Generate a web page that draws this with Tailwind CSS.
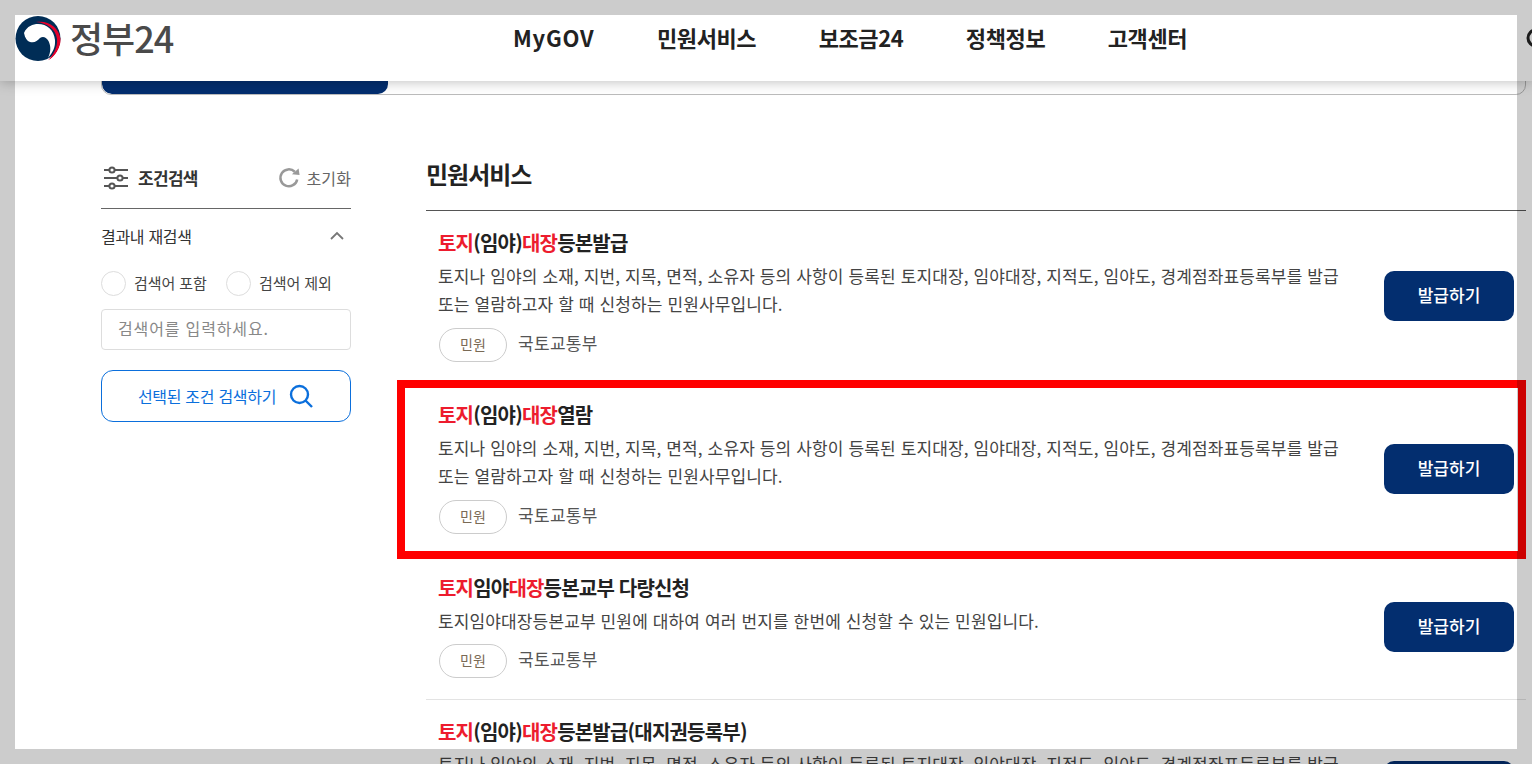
<!DOCTYPE html>
<html lang="ko">
<head>
    <meta charset="UTF-8">
    <meta name="viewport" content="width=device-width, initial-scale=1.0">
    <script src="https://cdn.jsdelivr.net/npm/@tailwindcss/browser@4"></script>
</head>
<body class="bg-white">
    <div class="relative w-[1532px] h-[764px] overflow-hidden bg-white font-['Noto_Sans_CJK_KR','Noto_Sans',sans-serif] text-[#333]">

        <!-- Header -->
        <header class="absolute top-0 left-0 z-10 w-full h-[81px] bg-white shadow-[0_1px_12px_rgba(0,0,0,0.25)]">
            <div class="absolute left-[15px] top-[16px] flex items-center gap-[9px]">
                <svg width="46" height="46" viewBox="0 0 46 46">
                    <circle cx="23" cy="22.5" r="22.5" fill="#002d56"/>
                    <path d="M9 17C12 10 18 8 23 8C32 8 39 14 40 24C40.5 31 38 36 33 42C36 36 36 30 33.5 25C31 21 28 20 25 22C22 25 20 27 15 26C12 25 10 22 9 17Z" fill="#fff"/>
                    <path d="M21 6C33 4 44 11 45.5 23C46 32 40 41 33 44.5C38 39 43 31 42 23C41 13 32 7 21 6Z" fill="#e4002b"/>
                    <path d="M33 44.5C40 41 46 32 45.5 23L46 46H33Z" fill="#fff"/>
                </svg>
                <span class="-mt-[4px] text-[36px] leading-[44px] font-medium text-[#4a4a4a] tracking-[-1px]">정부24</span>
            </div>
            <nav class="absolute left-[513px] top-[20px] flex gap-[62.5px] text-[22px] leading-[34px] font-bold text-[#222] tracking-[-0.4px]">
                <a href="#" class="tracking-[0.8px]">MyGOV</a>
                <a href="#">민원서비스</a>
                <a href="#">보조금24</a>
                <a href="#">정책정보</a>
                <a href="#">고객센터</a>
            </nav>
            <svg class="absolute left-[1526px] top-[28px]" width="20" height="20" viewBox="0 0 20 20" fill="none" stroke="#222" stroke-width="3"><circle cx="10" cy="10" r="8"/></svg>
        </header>

        <!-- Search tab bar -->
        <div class="ml-[101px] w-[1425px] h-[95px] pt-[70px]">
            <div class="h-[25px] border border-[#bbb] rounded-b-[10px] overflow-hidden">
                <div class="w-[286px] h-full bg-[#032e6f] rounded-b-[10px]"></div>
            </div>
        </div>

        <div class="flex items-start pl-[101px] pr-[6px]">
            <!-- Filter sidebar -->
            <aside class="w-[250px] shrink-0 pt-[65px]">
                <div class="flex items-center h-[49px] pb-[13px] border-b border-[#666]">
                    <svg class="ml-[3px] mr-[10px]" width="24" height="24" viewBox="0 0 24 24" fill="none" stroke="#555" stroke-width="2">
                        <path d="M0 4H24M0 12H24M0 20H24"/>
                        <circle cx="8" cy="4" r="2.6" fill="#fff"/>
                        <circle cx="16" cy="12" r="2.6" fill="#fff"/>
                        <circle cx="8" cy="20" r="2.6" fill="#fff"/>
                    </svg>
                    <span class="text-[17px] font-bold text-[#333] tracking-[-0.7px]">조건검색</span>
                    <svg class="ml-auto mr-[6px]" width="23" height="23" viewBox="0 0 24 24" fill="none">
                        <path d="M20 14A8.8 8.8 0 1 1 17.5 6" stroke="#999" stroke-width="2.6"/>
                        <path d="M14.5 8.5L22.5 9.5L21.5 2.5Z" fill="#999"/>
                    </svg>
                    <span class="text-[16px] text-[#666] tracking-[0.1px]">초기화</span>
                </div>
                <div class="flex items-center justify-between h-[56px] pb-[2px] text-[16px] text-[#333] tracking-[-0.3px]">
                    <span>결과내 재검색</span>
                    <svg class="mr-[6px]" width="16" height="10" viewBox="0 0 16 10" fill="none" stroke="#777" stroke-width="1.8"><path d="M2 8L8 2L14 8"/></svg>
                </div>
                <div class="flex items-center h-[25px] mt-[6px] text-[15px] text-[#444] tracking-[-0.1px]">
                    <span class="w-[25px] h-[25px] rounded-full border border-[#ddd] bg-white"></span>
                    <span class="ml-[8px] w-[92px]">검색어 포함</span>
                    <span class="w-[25px] h-[25px] rounded-full border border-[#ddd] bg-white"></span>
                    <span class="ml-[8px]">검색어 제외</span>
                </div>
                <input class="block w-full h-[41px] mt-[13px] px-[16px] pb-[3px] border border-[#ddd] rounded-[4px] text-[16px] tracking-[0.85px] placeholder:text-[#888]" placeholder="검색어를 입력하세요.">
                <button class="flex items-center justify-center gap-[12px] w-full h-[52px] mt-[20px] border border-[#0b6fdc] rounded-[12px] bg-white text-[16px] text-[#0b6fdc] tracking-[-0.3px]">
                    선택된 조건 검색하기
                    <svg width="26" height="26" viewBox="0 0 26 26" fill="none" stroke="#0b6fdc" stroke-width="2.4"><circle cx="11.5" cy="11.5" r="8.5"/><path d="M17.5 17.5L24 24"/></svg>
                </button>
            </aside>

            <!-- Results -->
            <main class="flex-1 ml-[75px] pt-[55px]">
                <h2 class="h-[61px] text-[24px] leading-[48px] font-bold text-[#222] tracking-[-1px] border-b border-[#555]">민원서비스</h2>

                <article class="flex items-center h-[171px] pl-[12px] pr-[12px] border-b border-[#e3e3e3]">
                    <div class="flex-1">
                        <h3 class="text-[20px] leading-[26px] font-bold text-[#222] tracking-[-0.8px]"><span class="text-[#ed1c2e]">토지</span>(임야)<span class="text-[#ed1c2e]">대장</span>등본발급</h3>
                        <p class="mt-[6px] text-[17px] leading-[28px] text-[#444] tracking-[0.13px]">토지나 임야의 소재, 지번, 지목, 면적, 소유자 등의 사항이 등록된 토지대장, 임야대장, 지적도, 임야도, 경계점좌표등록부를 발급<br>또는 열람하고자 할 때 신청하는 민원사무입니다.</p>
                        <div class="flex items-center gap-[11px] mt-[10px] ml-px">
                            <span class="flex items-center justify-center w-[68px] h-[34px] pb-px rounded-full border border-[#ccc] text-[14px] text-[#7a6a55]">민원</span>
                            <span class="pb-[5px] text-[17px] text-[#555] tracking-[0.3px]">국토교통부</span>
                        </div>
                    </div>
                    <button class="w-[130px] h-[50px] pb-[2px] rounded-[10px] bg-[#032e6f] text-[17px] font-medium text-white">발급하기</button>
                </article>

                <article class="flex items-center h-[173px] pl-[12px] pr-[12px] border-b border-[#e3e3e3]">
                    <div class="flex-1">
                        <h3 class="text-[20px] leading-[26px] font-bold text-[#222] tracking-[-0.8px]"><span class="text-[#ed1c2e]">토지</span>(임야)<span class="text-[#ed1c2e]">대장</span>열람</h3>
                        <p class="mt-[6px] text-[17px] leading-[28px] text-[#444] tracking-[0.13px]">토지나 임야의 소재, 지번, 지목, 면적, 소유자 등의 사항이 등록된 토지대장, 임야대장, 지적도, 임야도, 경계점좌표등록부를 발급<br>또는 열람하고자 할 때 신청하는 민원사무입니다.</p>
                        <div class="flex items-center gap-[11px] mt-[10px] ml-px">
                            <span class="flex items-center justify-center w-[68px] h-[34px] pb-px rounded-full border border-[#ccc] text-[14px] text-[#7a6a55]">민원</span>
                            <span class="pb-[5px] text-[17px] text-[#555] tracking-[0.3px]">국토교통부</span>
                        </div>
                    </div>
                    <button class="w-[130px] h-[50px] mt-px pb-[2px] rounded-[10px] bg-[#032e6f] text-[17px] font-medium text-white">발급하기</button>
                </article>

                <article class="flex items-center h-[145px] pl-[12px] pr-[12px] border-b border-[#e3e3e3]">
                    <div class="flex-1 mb-[2px]">
                        <h3 class="text-[20px] leading-[26px] font-bold text-[#222] tracking-[-0.8px]"><span class="text-[#ed1c2e]">토지</span>임야<span class="text-[#ed1c2e]">대장</span>등본교부 다량신청</h3>
                        <p class="mt-[6px] text-[17px] leading-[28px] text-[#444] tracking-[0.13px]">토지임야대장등본교부 민원에 대하여 여러 번지를 한번에 신청할 수 있는 민원입니다.</p>
                        <div class="flex items-center gap-[11px] mt-[9px] ml-px">
                            <span class="flex items-center justify-center w-[68px] h-[34px] pb-px rounded-full border border-[#ccc] text-[14px] text-[#7a6a55]">민원</span>
                            <span class="pb-[3px] text-[17px] text-[#555] tracking-[0.3px]">국토교통부</span>
                        </div>
                    </div>
                    <button class="w-[130px] h-[50px] pb-[2px] rounded-[10px] bg-[#032e6f] text-[17px] font-medium text-white">발급하기</button>
                </article>

                <article class="flex items-start h-[172px] pl-[12px] pr-[12px] pt-[18px]">
                    <div class="flex-1">
                        <h3 class="text-[20px] leading-[28px] font-bold text-[#222] tracking-[-0.8px]"><span class="text-[#ed1c2e]">토지</span>(임야)<span class="text-[#ed1c2e]">대장</span>등본발급(대지권등록부)</h3>
                        <p class="mt-[4px] text-[17px] leading-[28px] text-[#444] tracking-[0.13px]">토지나 임야의 소재, 지번, 지목, 면적, 소유자 등의 사항이 등록된 토지대장, 임야대장, 지적도, 임야도, 경계점좌표등록부를 발급</p>
                    </div>
                    <button class="w-[130px] h-[50px] mt-[43px] rounded-[10px] bg-[#032e6f] text-[17px] font-medium text-white">발급하기</button>
                </article>
            </main>
        </div>

        <!-- Red highlight box -->
        <div class="absolute left-[397px] top-[380px] z-20 w-[1129px] h-[179px] border-[8px] border-[#ff0000]"></div>

        <!-- Grey dimmed frame around the capture window -->
        <div class="absolute top-0 left-0 z-30 w-full h-[15px] bg-black/20"></div>
        <div class="absolute top-[749px] left-0 z-30 w-full h-[15px] bg-black/20"></div>
        <div class="absolute top-[15px] left-0 z-30 w-[15px] h-[734px] bg-black/20"></div>
        <div class="absolute top-[15px] left-[1517px] z-30 w-[15px] h-[734px] bg-black/20"></div>
    </div>
</body>
</html>
